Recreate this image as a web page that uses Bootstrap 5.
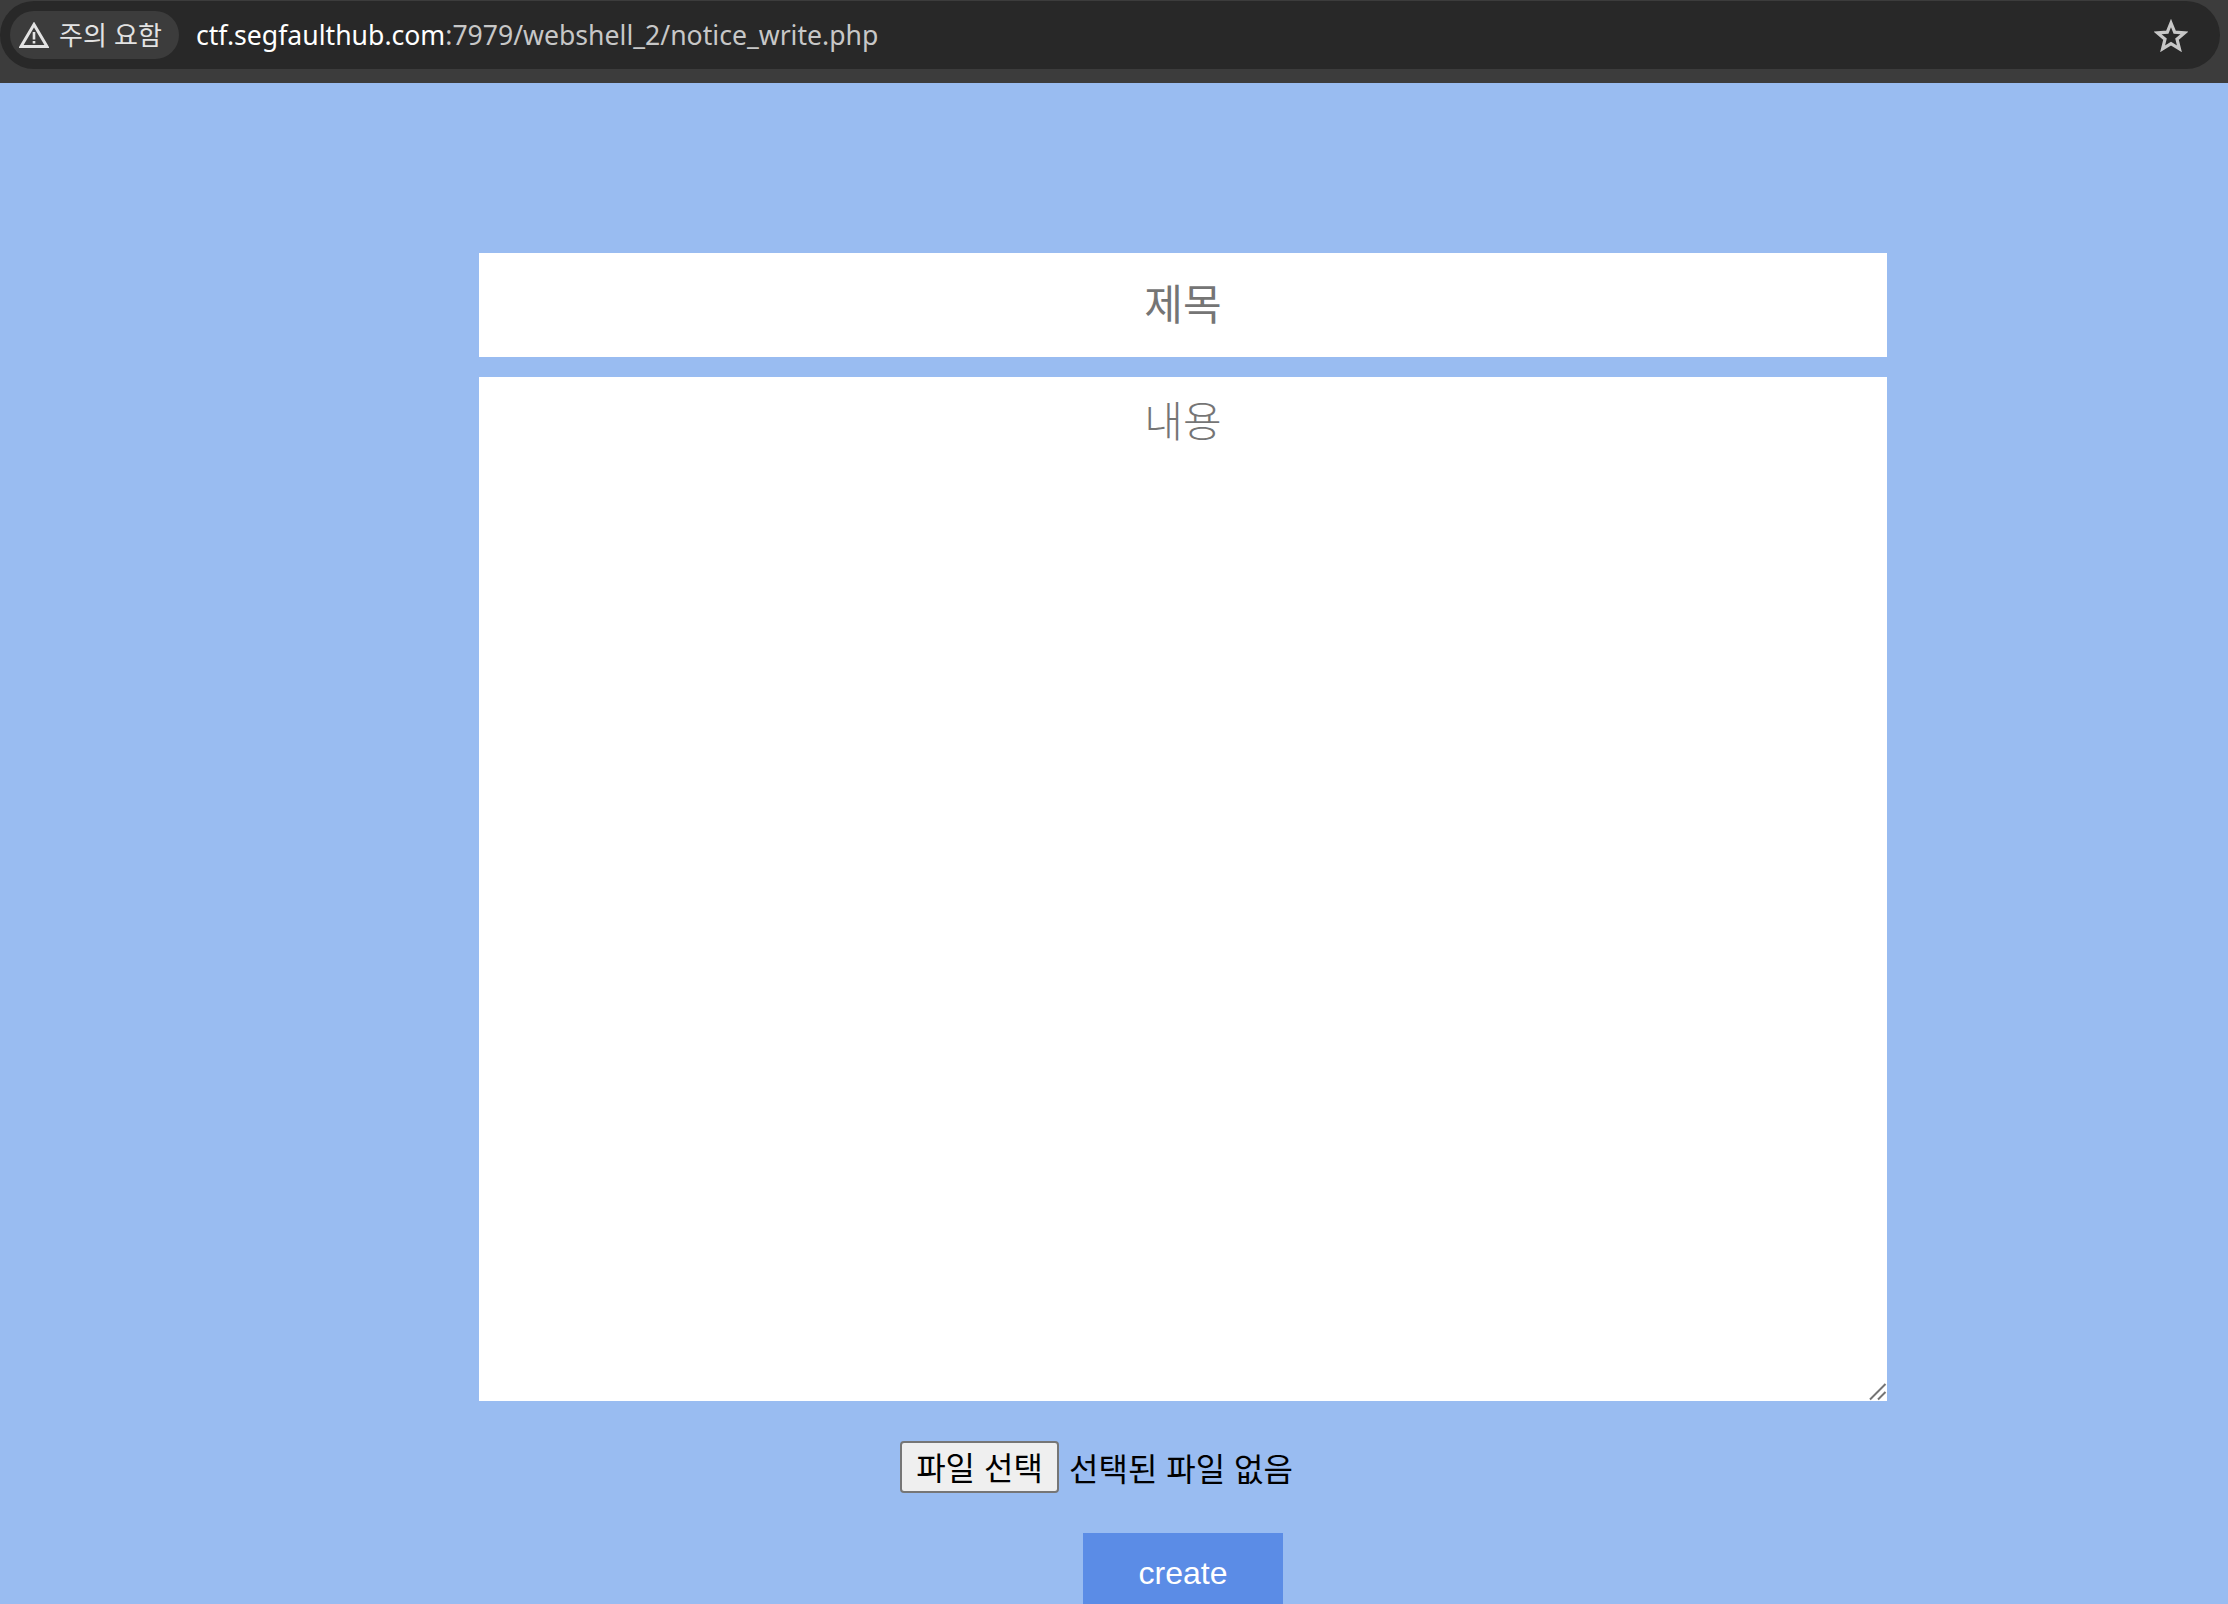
<!DOCTYPE html>
<html lang="ko">
<head>
    <meta charset="UTF-8">
    <title>notice_write</title>
    <link rel="stylesheet" href="https://cdn.jsdelivr.net/npm/bootstrap@5.3.0/dist/css/bootstrap.min.css">
    <style>
        html, body { height: 100%; overflow: hidden; }
        body { background: #99bcf1; font-family: "Liberation Sans", "Noto Sans CJK KR", sans-serif; }

        /* barre d'adresse */
        .browser-bar { height: 83px; background: #3c3c3c; padding: 1px 8px 14px 0; }
        .url-pill { height: 68px; background: #282828; border-radius: 34px; padding: 0 32px 0 10px; }
        .warn-chip { width: 169px; height: 48px; background: #3c3c3c; border-radius: 24px; padding: 0 0 3px 9px; gap: 10px; color: #e3e3e3; font: 26px "Noto Sans CJK KR", sans-serif; }
        .warn-chip svg { width: 30px; height: 26px; margin-top: 3px; }
        .url-text { margin-left: 17px; font: 26.6px "Noto Sans", sans-serif; color: #c7c7c7; white-space: nowrap; }
        .url-text b { font-weight: 400; color: #fff; }
        .star-icon { width: 34px; height: 33px; }

        /* formulaire */
        .write-form { width: 1408px; margin-left: 479px; padding-top: 170px; }
        .write-form .title-input, .write-form .body-input {
            display: block; width: 100%; border: 0; border-radius: 0; background: #fff; text-align: center;
            font: 300 42px "Noto Sans CJK KR", sans-serif; outline: 0; box-shadow: none;
        }
        .write-form .title-input { height: 104px; margin-bottom: 20px; padding: 0 0 8px; font-weight: 400; }
        .write-form .body-input { height: 1024px; min-height: 0; padding: 11px 0 0; resize: none; }
        .title-input::placeholder, .body-input::placeholder { color: #757575; opacity: 1; }
        .resize-grip { position: absolute; right: 0; bottom: 0; width: 18px; height: 18px; }
        .file-row { margin-top: 40px; padding-left: 421px; height: 52px; gap: 10px; font: 32px "Noto Sans CJK KR", sans-serif; color: #000; }
        .file-btn { width: 159px; height: 52px; padding: 0 0 2px; background: #efefef; border: 2px solid #767676; border-radius: 4px; font: inherit; color: #000; }
        .create-btn { display: block; width: 200px; height: 80px; margin: 40px 0 0 604px; padding: 0; background: #5b8ce6; border: 0; border-radius: 0; color: #fff; font: 32px "Liberation Sans", sans-serif; }
    </style>
</head>
<body>

    <!-- barre du navigateur -->
    <div class="browser-bar">
        <div class="url-pill d-flex align-items-center">
            <span class="warn-chip d-flex align-items-center">
                <svg viewBox="0 0 30 26"><path d="M15 2.500 28 24.500H2Z" fill="none" stroke="#e3e3e3" stroke-width="3" stroke-linejoin="miter"/><path d="M15 10v7.500M15 19v2.500" stroke="#e3e3e3" stroke-width="2.600"/></svg>
                주의 요함
            </span>
            <span class="url-text"><b>ctf.segfaulthub.com</b>:7979/webshell_2/notice_write.php</span>
            <svg class="star-icon ms-auto" viewBox="0 0 34 33"><path d="M17 4l3.7 9.2 9.8.7-7.5 6.3 2.4 9.6L17 24.600l-8.400 5.200 2.400-9.600-7.500-6.300 9.800-.7Z" fill="none" stroke="#c7c7c7" stroke-width="3.200" stroke-linejoin="miter"/></svg>
        </div>
    </div>

    <!-- formulaire d'ecriture -->
    <form class="write-form">
        <input type="text" class="form-control title-input" placeholder="제목">
        <div class="position-relative">
            <textarea class="form-control body-input" placeholder="내용"></textarea>
            <svg class="resize-grip" viewBox="0 0 18 18"><path d="M1 16.500 16.500 1M9 16.500l7.500-7.500" stroke="#747474" stroke-width="2" fill="none"/></svg>
        </div>
        <div class="file-row d-flex align-items-center">
            <button type="button" class="file-btn">파일 선택</button>
            <span>선택된 파일 없음</span>
        </div>
        <button type="submit" class="create-btn">create</button>
    </form>

</body>
</html>
